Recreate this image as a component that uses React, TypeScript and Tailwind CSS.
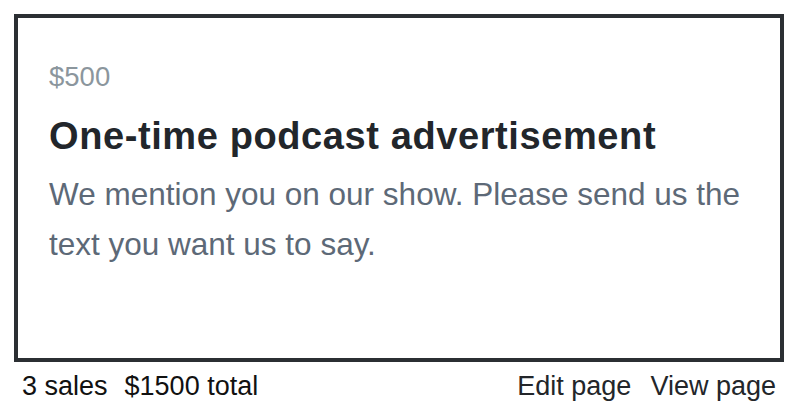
import React from "react";

export default function App() {
  return (
    <div
      className="w-[800px] h-[413px] bg-white pt-[14px] px-[14px]"
      style={{ fontFamily: '"Liberation Sans", Arial, Helvetica, sans-serif' }}
    >
      <div className="w-[770px] h-[348px] border-[4px] border-[#2b2f33] pl-[31px] pt-[43px]">
        <div className="text-[27.5px] leading-[32px] text-[#8b969d]">$500</div>
        <h1 className="mt-[22px] text-[38px] leading-[43px] tracking-[0.6px] font-bold text-[#22262b]">
          One-time podcast advertisement
        </h1>
        <p className="mt-[11px] text-[31.5px] leading-[50px] text-[#5d6977]">
          We mention you on our show. Please send us the
          <br />
          text you want us to say.
        </p>
      </div>
      <div className="mt-[8px] flex justify-between pl-[8px] pr-[10px] text-[27px] leading-[32px]">
        <div className="flex gap-[17px] text-[#111]">
          <span>3 sales</span>
          <span>$1500 total</span>
        </div>
        <div className="flex gap-[19px] text-[#23262a]">
          <span>Edit page</span>
          <span>View page</span>
        </div>
      </div>
    </div>
  );
}
